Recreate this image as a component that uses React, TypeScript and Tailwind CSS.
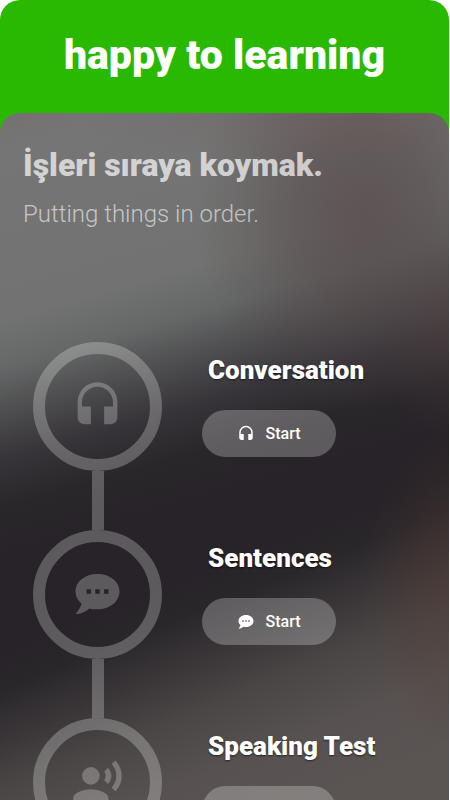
import React from 'react';
import { MdHeadset, MdRecordVoiceOver } from 'react-icons/md';
import type { IconType } from 'react-icons';

function ChatIcon({ className }: { className?: string }) {
  return (
    <svg viewBox="-2.500 -1 53 53" fill="currentColor" className={className} aria-hidden="true">
      <path
        fillRule="evenodd"
        d="M24 5C11.8 5 2 12.500 2 22.500c0 4.700 2.200 9 6 12.200C7.200 38 5 41.500 2 45c5.500 0 10-2 14-5.500 2.500.7 5.200.8 8 .8 12.200 0 22-7.800 22-17.800S36.200 5 24 5zM13 20.200h4.400v4.600H13zM21.800 20.200h4.400v4.600h-4.400zM30.600 20.200h4.400v4.600h-4.400z"
      />
    </svg>
  );
}

interface Step {
  title: string;
  icon: IconType | typeof ChatIcon;
}

const steps: Step[] = [
  { title: 'Conversation', icon: MdHeadset },
  { title: 'Sentences', icon: ChatIcon },
  { title: 'Speaking Test', icon: MdRecordVoiceOver },
];

function StepRow({ step, last }: { step: Step; last: boolean }) {
  const Icon = step.icon;

  return (
    <li className="flex gap-10">
      <div className="flex flex-col items-center">
        <div className="flex h-[129px] w-[129px] items-center justify-center rounded-full border-12 border-white/25">
          <Icon className="h-[53px] w-[53px] text-white/25" />
        </div>
        {!last && <div className="h-[59px] w-3 bg-white/25" />}
      </div>
      <div className="flex flex-col items-start pt-2.5">
        <h3 className="pl-1.5 text-[26px] leading-9 font-black text-white [text-shadow:0_1px_2px_#00000099]">
          {step.title}
        </h3>
        <button
          type="button"
          aria-label={`Start ${step.title}`}
          className="mt-[22px] flex h-[47px] w-[134px] items-center justify-center gap-2.5 rounded-full bg-white/25 text-base leading-4 font-medium text-white"
        >
          <Icon className="h-[18px] w-[18px]" />
          Start
        </button>
      </div>
    </li>
  );
}

export default function App() {
  return (
    <div className="h-screen bg-white pr-px font-[Roboto,sans-serif]">
      <div className="flex h-full flex-col overflow-hidden rounded-t-[20px] bg-[linear-gradient(#28b900_200px,#272328_200px)]">
        <header className="flex h-[113px] shrink-0 items-center justify-center pb-1">
          <h1 className="text-[41px] leading-[50px] font-black text-white">happy to learning</h1>
        </header>
        <main className="relative flex-1 overflow-y-auto rounded-t-[20px] bg-[radial-gradient(260px_50px_at_330px_0px,#70585850,#70585800),radial-gradient(170px_200px_at_365px_100px,#544647b0,#54464780_40%,#54464730_75%,#54464700),radial-gradient(80px_110px_at_460px_220px,#5a444460,#5a444400),radial-gradient(110px_170px_at_470px_480px,#543a3080,#543a3050_40%,#543a3000),linear-gradient(164deg,#77706f_0px,#757575_35px,#717271_200px,#666868_245px,#4c4b4d_292px,#363438_335px,#2a272b_380px,#27232800_430px),linear-gradient(158deg,#272328_500px,#2a272b_536px,#3a3638_582px,#4a4646_628px,#575251_690px,#5a5553_760px)] [scrollbar-width:none]">
          <div className="px-[23px] pt-8">
            <h2 className="text-[32px] leading-10 font-black text-white/70">İşleri sıraya koymak.</h2>
            <p className="mt-[13px] text-2xl leading-8 font-light text-white/60">Putting things in order.</p>
          </div>
          <ol className="mt-28 pl-[33px]">
            {steps.map((step, index) => (
              <StepRow key={step.title} step={step} last={index === steps.length - 1} />
            ))}
          </ol>
        </main>
      </div>
    </div>
  );
}
